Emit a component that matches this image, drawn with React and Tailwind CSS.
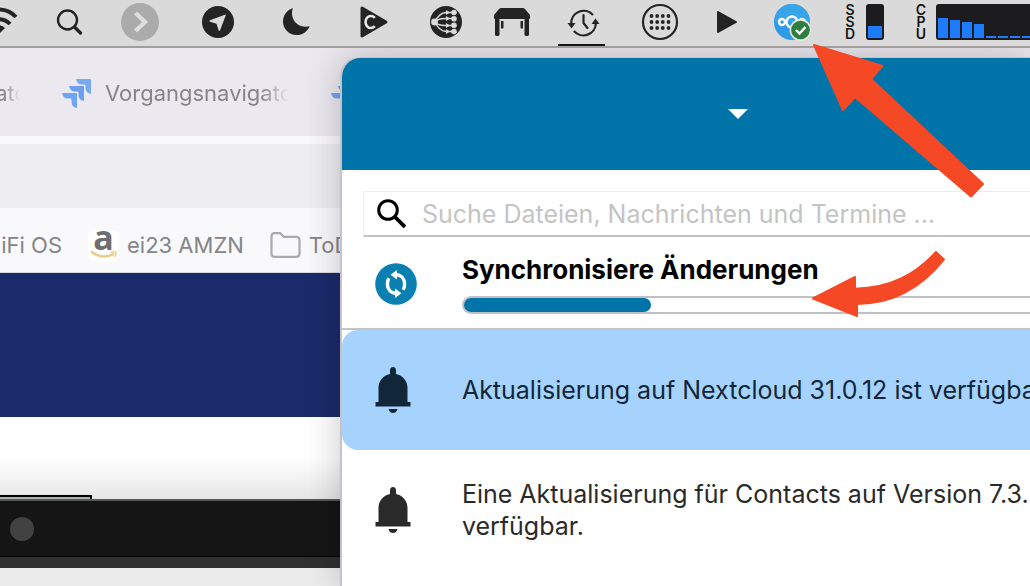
import React from 'react';

const cpuLoad = [20, 18, 16, 14, 2, 2, 2, 2];

// Icons in the menu bar are drawn around their own centre
function StatusIcon({ label, size, box, children, active }) {
    return (
        <button type="button" aria-label={label} className="relative flex h-full shrink-0 items-start">
            <svg className={`h-11 ${size}`} viewBox={box} fill="#242424" aria-hidden="true">
                {children}
            </svg>
            {active && <span className="absolute -left-1 right-0 bottom-0 h-[2px] bg-[#141414]" />}
        </button>
    );
}

function StackedLabel({ text }) {
    return (
        <span className="flex w-[10px] flex-col items-center pt-1 text-[14px] leading-3 font-semibold text-[#141414]">
            {text.split('').map((letter, i) => (
                <span key={i}>{letter}</span>
            ))}
        </span>
    );
}

function MenuBar() {
    return (
        <header className="relative z-20 flex h-12 shrink-0 gap-8 overflow-hidden border-b-2 border-[#a29d9d] bg-[#dadada]">
            <StatusIcon label="WLAN" size="w-[21px]" box="0 -22 21 44">
                <g fill="none" stroke="#242424" strokeWidth="4">
                    <path d="M-18 -5A23 23 0 0 1 16 -5" />
                    <path d="M-12 2A15 15 0 0 1 10 2" />
                </g>
                <path d="M-8 6A9 9 0 0 1 5 6L-1 12Z" />
            </StatusIcon>
            <StatusIcon label="Suche" size="w-[34px]" box="-17 -22 34 44">
                <circle cx="-2.5" cy="-2" r="9.5" fill="none" stroke="#242424" strokeWidth="2.4" />
                <path d="M4.5 5L10.5 11" stroke="#242424" strokeWidth="3.4" strokeLinecap="round" />
            </StatusIcon>
            <StatusIcon label="Weitere" size="w-[42px]" box="-21 -22 42 44">
                <circle r="19" fill="#ababab" />
                <path d="M-4.5 -9L5 0L-4.5 9" fill="none" stroke="#dedede" strokeWidth="4.2" />
            </StatusIcon>
            <StatusIcon label="Telegram" size="w-[50px]" box="-25 -22 50 44">
                <circle r="16" />
                <path d="M7.5 -7.5Q8 -8 7.5 -6L2 8.5Q1.2 9.5 .6 8.2L-1.5 1.8L-8 -.3Q-9.5 -1 -8 -1.7Z" fill="#dadada" />
            </StatusIcon>
            <StatusIcon label="Nicht stören" size="w-[43px]" box="-21.5 -22 43 44">
                <path d="M-3.6 -14C-7 -4 0 7 13.2 4.2C11 9.5 6 13 0 13C-7.5 13 -13.5 7 -13.5 -.5C-13.5 -6.5 -9.5 -12 -3.6 -14Z" />
            </StatusIcon>
            <StatusIcon label="Player" size="w-12" box="-24 -22 48 44">
                <path d="M-12 -14L12 0L-12 14Z" stroke="#242424" strokeWidth="3" strokeLinejoin="round" />
                <path d="M.8 -4.2A5.4 6 0 1 0 .8 4.2" fill="none" stroke="#e6e6e6" strokeWidth="2.6" />
            </StatusIcon>
            <StatusIcon label="Netzwerk" size="w-8" box="-16 -22 32 44">
                <circle r="16" />
                <g stroke="#dadada" strokeWidth="1.5" fill="none">
                    <path d="M-11 0Q-8 -3.5 -1 -3.5H8M-11 0Q-8 3.5 -1 3.5H8M-11 0Q-7 -9 0 -9.5H8M-11 0Q-7 9 0 9.5H8" />
                </g>
                <g fill="#dadada">
                    <circle cx="-11.5" r="3.4" />
                    <circle cx="8" cy="-9.5" r="2.8" />
                    <circle cx="8" cy="-3.3" r="2.8" />
                    <circle cx="8" cy="3.3" r="2.8" />
                    <circle cx="8" cy="9.5" r="2.8" />
                    <path d="M0 -12L4 -9.5L0 -7ZM0 -6L4 -3.5L0 -1ZM0 1L4 3.5L0 6ZM0 7L4 9.5L0 12Z" />
                </g>
            </StatusIcon>
            <StatusIcon label="Schreibtisch" size="w-9" box="-18 -22 36 44">
                <path d="M-11 -14H11Q12 -14 13 -13L18 -7V-4Q18 -3 17 -3H-17Q-18 -3 -18 -4V-7L-13 -13Q-12 -14 -11 -14Z" />
                <path d="M-17 -4H-12.5V13Q-12.5 14 -14.7 14Q-17 14 -17 13ZM12.5 -4H17V13Q17 14 14.7 14Q12.5 14 12.5 13Z" />
                <path d="M-11 -1H-8.5V6Q-11 8 -11 5ZM8.5 -1H11V5Q11 8 8.5 6Z" />
            </StatusIcon>
            <StatusIcon label="Time Machine" size="w-[43px]" box="-21.5 -22 43 44" active>
                <g fill="none" stroke="#242424" strokeWidth="2.2">
                    <path d="M-12.3 2A12.5 12.5 0 0 1 9.5 -7" />
                    <path d="M12.4 1A12.5 12.5 0 0 1 -9.6 9" />
                    <path d="M0 -7V1L4 6" strokeLinecap="round" />
                </g>
                <path d="M-16 1H-8L-12 6.5ZM8 2H16L12 -3.5Z" />
            </StatusIcon>
            <StatusIcon label="Startpad" size="w-[46px]" box="-23 -22 46 44">
                <circle r="17" fill="none" stroke="#242424" strokeWidth="2.2" />
                {[-6, 0, 6].map((y) => [-8.5, -2.8, 2.8, 8.5].map((x) => <circle key={`${x}${y}`} cx={x} cy={y} r="1.9" />))}
            </StatusIcon>
            <StatusIcon label="Wiedergabe" size="w-6" box="-12 -22 24 44">
                <path d="M-9 -10L9 0L-9 10Z" stroke="#242424" strokeWidth="2" strokeLinejoin="round" />
            </StatusIcon>
            <StatusIcon label="Nextcloud" size="w-[42px]" box="-21 -22 42 44">
                <circle r="18" fill="#2e9be6" />
                <path d="M-18 0A18 18 0 0 1 18 0Z" fill="#38a4e8" />
                <g fill="none" stroke="#fff" strokeWidth="2.4">
                    <circle cx="-10" cy="0" r="3" />
                    <circle cx="0" cy="0" r="5.5" />
                    <circle cx="10" cy="0" r="3" />
                </g>
                <circle cx="8.5" cy="8" r="11" fill="#dfe9e0" />
                <circle cx="8.5" cy="8" r="9.3" fill="#2f7d40" />
                <path d="M4 8L7.5 11.5L13.5 5" fill="none" stroke="#fff" strokeWidth="2.4" />
            </StatusIcon>
            <div className="flex gap-[11px]">
                <StackedLabel text="SSD" />
                <div className="mt-1 flex h-9 w-[18px] items-end rounded-[3px] bg-[#1c1c1e] p-[2px]">
                    <span className="h-3 w-full bg-[#1c7cfb]" />
                </div>
            </div>
            <div className="flex flex-1 gap-[10px]">
                <StackedLabel text="CPU" />
                <div className="mt-1 flex h-9 flex-1 items-end gap-[2px] overflow-hidden rounded-l-[3px] bg-[#1c1c1e] p-[2px]">
                    {cpuLoad.map((load, i) => (
                        <span key={i} className="w-[10px] shrink-0 bg-[#1c7cfb]" style={{ height: load }} />
                    ))}
                </div>
            </div>
        </header>
    );
}

function JiraIcon() {
    return (
        <svg className="size-[29px] shrink-0" viewBox="0 0 29 29" aria-hidden="true">
            <path d="M14 0H28Q29 0 29 1V15Q23.5 14 23.5 9V6.5Q23.5 5.5 22.5 5.5H20Q15 5.5 14 0Z" fill="#78aaf4" />
            <path d="M7 7H21Q22 7 22 8V22Q16.5 21 16.5 16V13.5Q16.5 12.5 15.5 12.5H13Q8 12.5 7 7Z" fill="#6c9ff0" />
            <path d="M0 14H14Q15 14 15 15V29Q9.5 28 9.5 23V20.5Q9.5 19.5 8.5 19.5H6Q1 19.5 0 14Z" fill="#6fa5f5" />
        </svg>
    );
}

function Browser() {
    return (
        <section className="flex w-[33%] shrink-0 flex-col overflow-hidden whitespace-nowrap text-[#858588]">
            <nav className="flex h-[88px] shrink-0 items-center bg-[#ebe9ef] pt-[2px] text-[22px]">
                <a href="#tab-1" className="flex w-5 shrink-0 justify-end overflow-hidden mask-r-from-20%">
                    <span className="-mr-4">Navigator</span>
                </a>
                <a href="#tab-2" className="ml-[42px] flex shrink-0 items-center gap-[14px]">
                    <JiraIcon />
                    <span className="w-[184px] overflow-hidden mask-r-from-85%">Vorgangsnavigator</span>
                </a>
                <a href="#tab-3" aria-label="Jira" className="ml-[42px] shrink-0">
                    <JiraIcon />
                </a>
            </nav>
            <div className="h-[72px] shrink-0 border-t-8 border-[#f9f9fb] bg-[#eeeef0]" />
            <nav className="flex h-[65px] shrink-0 items-center border-b border-[#d8d8e0] bg-[#f9f9fb] pt-[10px] text-[22px]">
                <a href="#unifi" className="flex w-[62px] shrink-0 justify-end overflow-hidden">UniFi OS</a>
                <a href="#amazon" className="ml-[26px] flex shrink-0 items-center gap-2">
                    <span className="relative flex size-[31px] items-start justify-center rounded-md bg-white">
                        <span className="font-['Open_Sans'] text-[34px] leading-[14px] font-bold text-[#6e6e70]">a</span>
                        <svg className="absolute inset-x-0 bottom-0 h-3 w-[31px]" viewBox="0 0 31 12" fill="none" stroke="#f0c885" aria-hidden="true">
                            <path d="M3 2.5Q14 11 26 5" strokeWidth="2.5" />
                            <path d="M23 3.5Q28 2 28 3.5Q28 5.5 26.5 8" strokeWidth="1.5" />
                        </svg>
                    </span>
                    ei23 AMZN
                </a>
                <a href="#todo" className="ml-[26px] flex shrink-0 items-center gap-2">
                    <svg className="h-[26px] w-[31px]" viewBox="0 0 31 26" fill="none" stroke="#a9a9ae" strokeWidth="2.2" aria-hidden="true">
                        <path d="M1.5 4.5Q1.5 1.2 4.5 1.2H10L14 4.8H26Q29.5 4.8 29.5 8V21.5Q29.5 24.8 26 24.8H4.5Q1.5 24.8 1.5 21.5Z" />
                    </svg>
                    ToDo
                </a>
            </nav>
            <div className="h-36 shrink-0 bg-[#1b2a6b]" />
            <div className="flex h-[82px] shrink-0 items-end bg-linear-to-b from-white from-50% to-[#e6e6e6]">
                <div className="h-1 w-[92px] border-t-2 border-r-2 border-black bg-[#a9b1b1]" />
            </div>
            <div className="flex h-[58px] shrink-0 items-center border-t-2 border-b border-t-[#555a58] border-b-black bg-[#151515] pl-[10px]">
                <span className="size-6 rounded-full bg-[#424242]" />
            </div>
            <div className="h-[11px] shrink-0 bg-[#303030]" />
            <div className="flex-1 bg-[#ececec]" />
        </section>
    );
}

function Bell() {
    return (
        <svg className="h-[46px] w-9 shrink-0" viewBox="0 0 36 46" fill="currentColor" aria-hidden="true">
            <path d="M15 7V3.5Q15 0 18 0Q21 0 21 3.5V7C28 8.5 32.5 14 32.5 21V35H35.5V39.5H.5V35H3.5V21C3.5 14 8 8.5 15 7Z" />
            <path d="M13.5 42H22.5Q21.5 46 18 46Q14.5 46 13.5 42Z" />
        </svg>
    );
}

function Activity({ children, selected }) {
    return (
        <li className={`flex h-30 items-center gap-[51px] pl-[33px] ${selected ? 'rounded-l-2xl bg-[#a5d3fe] text-[#12263a]' : 'text-[#2a2a2a]'}`}>
            <Bell />
            <p>{children}</p>
        </li>
    );
}

function NextcloudPopup() {
    return (
        <main className="relative z-10 mt-[9px] flex min-w-0 flex-1 flex-col overflow-hidden rounded-tl-[20px] border-t border-l-2 border-[#c3c3c9] bg-white whitespace-nowrap shadow-[0_0_36px_rgba(0,0,0,0.22)]">
            <div className="flex h-28 shrink-0 items-center bg-[#0074a9]">
                <button type="button" aria-label="Konto wechseln" className="flex h-full w-[406px] items-center justify-end">
                    <svg className="h-[10px] w-5" viewBox="0 0 20 10" fill="#fff" aria-hidden="true">
                        <path d="M0 0H20L10 10Z" />
                    </svg>
                </button>
            </div>
            <label className="mt-[21px] ml-[21px] flex h-[46px] shrink-0 items-center gap-4 border-t border-b-2 border-l border-t-[#ececec] border-b-[#c4c4c4] border-l-[#ececec] pl-[13px]">
                <svg className="size-[29px] shrink-0" viewBox="0 0 29 29" fill="none" stroke="#000" aria-hidden="true">
                    <circle cx="11" cy="11" r="9.3" strokeWidth="3" />
                    <path d="M17.5 17.5L28 28" strokeWidth="3.8" />
                </svg>
                <input
                    type="search"
                    aria-label="Suche"
                    placeholder="Suche Dateien, Nachrichten und Termine ..."
                    className="min-w-0 flex-1 placeholder:text-[#c4c4c4] outline-none"
                />
            </label>
            <div className="flex h-[93px] shrink-0 items-center gap-[45px] border-b-2 border-[#c4c4c4] pt-[2px] pl-[33px]">
                <svg className="size-[42px] shrink-0" viewBox="-21 -21 42 42" aria-hidden="true">
                    <circle r="20.8" fill="#0a80b2" />
                    <g fill="none" stroke="#fff" strokeWidth="3.4">
                        <path d="M0 -9.3C5.5 -9 8.6 -5 8.6 0Q8.6 3 7.2 5.8" />
                        <path d="M0 9.3C-5.5 9 -8.6 5 -8.6 0Q-8.600 -3 -7.2 -5.8" />
                    </g>
                    <path d="M-5.500 -9.300L1 -14V-4.600ZM5.500 9.300L-1 14V4.600Z" fill="#fff" />
                </svg>
                <div className="min-w-0 flex-1">
                    <h1 className="text-[26px] leading-8 font-bold text-black">Synchronisiere Änderungen</h1>
                    <div role="progressbar" aria-label="Synchronisiere Änderungen" aria-valuenow={33} className="mt-[10px] h-[18px] rounded-l-full border-2 border-r-0 border-[#bfc1c6]">
                        <div className="h-full w-[33%] rounded-full bg-[#0074a9]" />
                    </div>
                </div>
            </div>
            <ul>
                <Activity selected>Aktualisierung auf Nextcloud 31.0.12 ist verfügbar.</Activity>
                <Activity>
                    Eine Aktualisierung für Contacts auf Version 7.3.
                    <br />
                    verfügbar.
                </Activity>
            </ul>
        </main>
    );
}

function Arrows() {
    return (
        <svg className="pointer-events-none absolute top-10 left-[808px] z-30 h-[280px] w-[180px]" viewBox="808 40 180 280" fill="#f54824" stroke="#f54824" strokeWidth="2" strokeLinejoin="round" aria-hidden="true">
            <path d="M814 45L882.5 66L871 79L983 184L971 196.5L855 97L843 110Z" />
            <path d="M813 298.5L855 277V288.7C890 288 915 275 936 252L944 259.5C922 287 893 304 857 304L857 316Z" />
        </svg>
    );
}

export default function App() {
    return (
        <div className="relative flex h-screen flex-col overflow-hidden bg-[#ebe9ef] font-['Inter',sans-serif] text-[25px] leading-8">
            <MenuBar />
            <div className="flex min-h-0 flex-1">
                <Browser />
                <NextcloudPopup />
            </div>
            <Arrows />
        </div>
    );
}
